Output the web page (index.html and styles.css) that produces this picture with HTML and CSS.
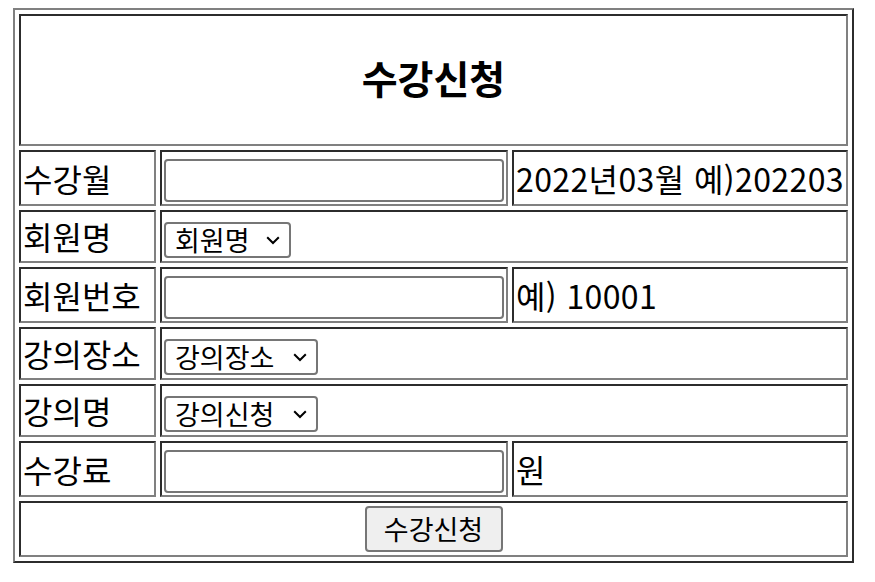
FILE: index.html
```html
<!DOCTYPE html>
<html lang="ko">
<head>
<meta charset="utf-8">
<title>수강신청</title>
<link rel="stylesheet" href="styles.css">
</head>
<body>
<form class="form">
<table class="sheet">
  <tr class="r-title">
    <th colspan="3" class="title">수강신청</th>
  </tr>
  <tr class="r-in">
    <td class="c1">수강월</td>
    <td class="c2"><input class="field" type="text"></td>
    <td class="c3 note">2022년03월 예)202203</td>
  </tr>
  <tr class="r-sel">
    <td>회원명</td>
    <td colspan="2"><span class="sel sel-short"><select class="sel-box"><option>회원명</option></select><svg class="chev" viewBox="0 0 14 9" width="14" height="9"><path d="M1.2 1.2 L7 7 L12.8 1.2" fill="none" stroke="#000" stroke-width="2"/></svg></span></td>
  </tr>
  <tr class="r-in">
    <td>회원번호</td>
    <td><input class="field" type="text"></td>
    <td class="note">예) 10001</td>
  </tr>
  <tr class="r-sel">
    <td>강의장소</td>
    <td colspan="2"><span class="sel sel-long"><select class="sel-box"><option>강의장소</option></select><svg class="chev" viewBox="0 0 14 9" width="14" height="9"><path d="M1.2 1.2 L7 7 L12.8 1.2" fill="none" stroke="#000" stroke-width="2"/></svg></span></td>
  </tr>
  <tr class="r-sel">
    <td>강의명</td>
    <td colspan="2"><span class="sel sel-long"><select class="sel-box"><option>강의신청</option></select><svg class="chev" viewBox="0 0 14 9" width="14" height="9"><path d="M1.2 1.2 L7 7 L12.8 1.2" fill="none" stroke="#000" stroke-width="2"/></svg></span></td>
  </tr>
  <tr class="r-in">
    <td>수강료</td>
    <td><input class="field" type="text"></td>
    <td class="note">원</td>
  </tr>
  <tr class="r-btn">
    <td colspan="3" class="btn-cell"><button type="button" class="btn">수강신청</button></td>
  </tr>
</table>
</form>
</body>
</html>
```

FILE: styles.css
```css
html, body {
  background: #fff;
}
body {
  margin: 8px 0 0 13px;
  font-family: "Noto Sans CJK KR", "Noto Sans", sans-serif;
  color: #000;
}
.form {
  margin: 0;
}
.sheet {
  width: 841px;
  border-collapse: separate;
  border-spacing: 4px;
  border-style: solid;
  border-width: 2px;
  border-color: #808080 #2c2c2c #2c2c2c #808080;
}
.sheet th,
.sheet td {
  box-sizing: border-box;
  padding: 2px;
  border-style: solid;
  border-width: 2px;
  border-color: #2c2c2c #808080 #808080 #2c2c2c;
  font-size: 32px;
  white-space: nowrap;
  vertical-align: middle;
  text-align: left;
}
.c1 { width: 137px; }
.c2 { width: 348px; }
.c3 { width: 336px; }
.note { letter-spacing: 0.4px; }

.sheet .title {
  font-size: 39px;
  font-weight: bold;
  text-align: center;
  line-height: 118px;
  padding-bottom: 8px;
  height: 132px;
}
.r-in td { line-height: 48px; height: 56px; }
.r-sel td { line-height: 45px; height: 53px; }
.r-btn td { line-height: 48px; height: 56px; }

.field {
  box-sizing: border-box;
  width: 340px;
  height: 43px;
  margin: 0;
  padding: 0 4px;
  border: 2px solid #767676;
  border-radius: 4px;
  background: #fff;
  font-family: inherit;
  font-size: 25px;
  vertical-align: bottom;
}

.sel {
  position: relative;
  display: inline-block;
  vertical-align: bottom;
  margin-bottom: 1px;
  height: 36px;
}
.sel-short { width: 127px; }
.sel-long { width: 154px; }
.sel-box {
  -webkit-appearance: none;
  appearance: none;
  box-sizing: border-box;
  width: 100%;
  height: 36px;
  margin: 0;
  padding: 0 0 0 9px;
  border: 2px solid #767676;
  border-radius: 4px;
  background: #fff;
  color: #000;
  font-family: "Noto Sans CJK KR", "Noto Sans", sans-serif;
  font-size: 27px;
  line-height: 32px;
  display: block;
}
.chev {
  position: absolute;
  right: 11px;
  top: 14px;
  pointer-events: none;
}

.btn-cell {
  text-align: center !important;
}
.btn {
  box-sizing: border-box;
  width: 138px;
  height: 46px;
  margin: 0 0 1px 0;
  padding: 0;
  border: 2px solid #767676;
  border-radius: 4px;
  background: #efefef;
  color: #000;
  font-family: "Noto Sans CJK KR", "Noto Sans", sans-serif;
  font-size: 27px;
  line-height: 40px;
  vertical-align: bottom;
}
```
